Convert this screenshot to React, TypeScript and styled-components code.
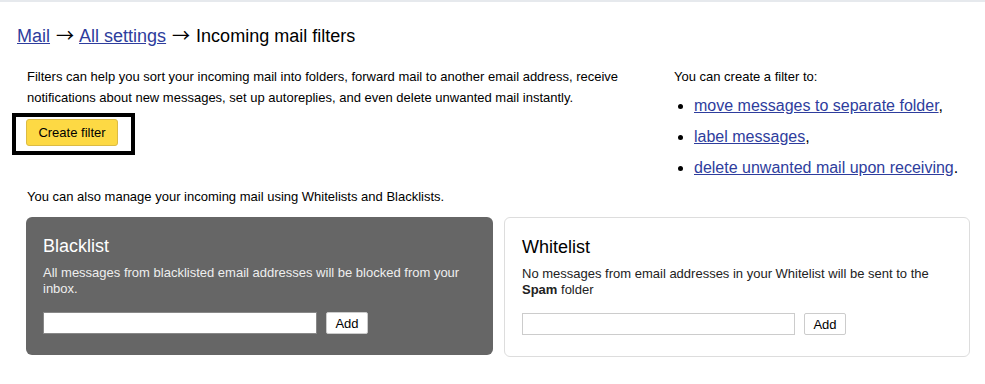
import React from "react";
import styled, { createGlobalStyle } from "styled-components";

const GlobalStyle = createGlobalStyle`
  body {
    margin: 0;
    background: #ffffff;
    font-family: "Liberation Sans", Arial, sans-serif;
    font-size: 13px;
    color: #000;
  }
`;

const TopBar = styled.div`
  height: 2px;
  background: #e6e9ed;
`;

const Page = styled.div`
  padding: 0 15px 0 17px;
`;

const Breadcrumb = styled.h1`
  margin: 23px 0 0;
  font-size: 18px;
  font-weight: normal;
  line-height: 22px;
  color: #000;
`;

const Arrow = styled.span`
  font-family: "Noto Sans CJK SC", sans-serif;
  font-size: 18px;
  line-height: 12px;
  margin: 0 1px;
`;

const Link = styled.a`
  color: #2e3d9d;
  text-decoration: underline;
  cursor: pointer;
`;

const Content = styled.div`
  padding-left: 10px;
`;

const Intro = styled.div`
  display: flex;
  margin-top: 19px;
`;

const IntroLeft = styled.div`
  width: 620px;
  margin-right: 27px;
`;

const IntroText = styled.p`
  margin: 0;
  line-height: 21px;
`;

const ButtonWrap = styled.div`
  position: relative;
  display: inline-block;
  margin-top: 11px;
`;

const Highlight = styled.div`
  position: absolute;
  left: -15px;
  top: -6px;
  right: -17px;
  bottom: -9px;
  border: 4px solid #000;
  pointer-events: none;
`;

const CreateButton = styled.button`
  display: block;
  width: 92px;
  height: 27px;
  margin-left: -1px;
  padding: 0;
  background: #fdd944;
  border: 1px solid #dcbb44;
  border-radius: 3px;
  font-family: inherit;
  font-size: 13px;
  color: #000;
`;

const IntroRight = styled.div`
  flex: 1;
`;

const RightTitle = styled.div`
  line-height: 21px;
`;

const FilterList = styled.ul`
  margin: 3px 0 0;
  padding-left: 20px;
  font-size: 16px;
  line-height: 31px;
`;

const Note = styled.div`
  margin-top: 6px;
  line-height: 16px;
`;

const Panels = styled.div`
  display: grid;
  grid-template-columns: 467px 466px;
  gap: 11px;
  align-items: start;
  margin: 12px 0 0 -1px;
`;

const Panel = styled.section<{ $dark?: boolean }>`
  background: ${(p) => (p.$dark ? "#666666" : "#ffffff")};
  border: ${(p) => (p.$dark ? "none" : "1px solid #dddddd")};
  border-radius: 6px;
  padding: 18px 17px 21px;
  color: ${(p) => (p.$dark ? "#ffffff" : "#000000")};
`;

const PanelTitle = styled.h2`
  margin: 0;
  font-size: 18px;
  font-weight: normal;
  line-height: 22px;
`;

const PanelText = styled.p<{ $dark?: boolean }>`
  margin: 8px 0 0;
  line-height: 16px;
  color: ${(p) => (p.$dark ? "#eeeeee" : "#222222")};
  b {
    font-weight: bold;
  }
`;

const AddRow = styled.div`
  display: flex;
  gap: 9px;
  margin-top: 15px;
`;

const EmailInput = styled.input<{ $dark?: boolean }>`
  box-sizing: border-box;
  width: ${(p) => (p.$dark ? "274px" : "273px")};
  height: 22px;
  margin: 0;
  background: #ffffff;
  border: 1px solid ${(p) => (p.$dark ? "#888888" : "#cccccc")};
  border-radius: 0;
  font-family: inherit;
  font-size: 13px;
`;

const AddButton = styled.button`
  box-sizing: border-box;
  width: 42px;
  height: 22px;
  padding: 0;
  background: #ffffff;
  border: 1px solid #cccccc;
  border-radius: 2px;
  font-family: inherit;
  font-size: 13px;
  color: #000;
`;

const App: React.FC = () => {
  return (
    <>
      <GlobalStyle />
      <TopBar />
      <Page>
        <Breadcrumb>
          <Link>Mail</Link> <Arrow>→</Arrow> <Link>All settings</Link> <Arrow>→</Arrow> Incoming mail filters
        </Breadcrumb>
        <Content>
          <Intro>
            <IntroLeft>
              <IntroText>
                Filters can help you sort your incoming mail into folders, forward mail to another email address, receive
                notifications about new messages, set up autoreplies, and even delete unwanted mail instantly.
              </IntroText>
              <ButtonWrap>
                <CreateButton>Create filter</CreateButton>
                <Highlight />
              </ButtonWrap>
            </IntroLeft>
            <IntroRight>
              <RightTitle>You can create a filter to:</RightTitle>
              <FilterList>
                <li><Link>move messages to separate folder</Link>,</li>
                <li><Link>label messages</Link>,</li>
                <li><Link>delete unwanted mail upon receiving</Link>.</li>
              </FilterList>
            </IntroRight>
          </Intro>
          <Note>You can also manage your incoming mail using Whitelists and Blacklists.</Note>
          <Panels>
            <Panel $dark>
              <PanelTitle>Blacklist</PanelTitle>
              <PanelText $dark>All messages from blacklisted email addresses will be blocked from your inbox.</PanelText>
              <AddRow>
                <EmailInput $dark />
                <AddButton>Add</AddButton>
              </AddRow>
            </Panel>
            <Panel>
              <PanelTitle>Whitelist</PanelTitle>
              <PanelText>
                No messages from email addresses in your Whitelist will be sent to the <b>Spam</b> folder
              </PanelText>
              <AddRow>
                <EmailInput />
                <AddButton>Add</AddButton>
              </AddRow>
            </Panel>
          </Panels>
        </Content>
      </Page>
    </>
  );
};

export default App;
